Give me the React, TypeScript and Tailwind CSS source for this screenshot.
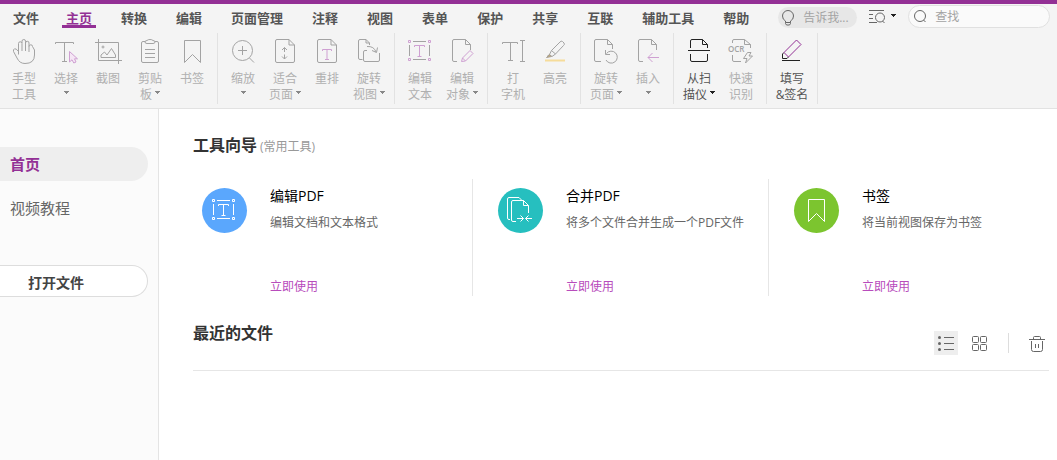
import { useState } from "react";
import type { ReactNode } from "react";
import clsx from "clsx";

const TABS = [
  "主页",
  "转换",
  "编辑",
  "页面管理",
  "注释",
  "视图",
  "表单",
  "保护",
  "共享",
  "互联",
  "辅助工具",
  "帮助",
];

type Tool = {
  lines: string[];
  icon: ReactNode;
  menu?: boolean;
  enabled?: boolean;
};

const Icon = ({ children }: { children: ReactNode }) => (
  <svg
    className="h-7 w-7 shrink-0"
    viewBox="0 0 28 28"
    fill="none"
    stroke="currentColor"
    strokeWidth="1"
    strokeLinejoin="round"
    aria-hidden="true"
  >
    {children}
  </svg>
);

const Caret = () => (
  <svg className="h-[3px] w-[5px] shrink-0" viewBox="0 0 5 3" fill="currentColor" aria-hidden="true">
    <path d="M0 0H5V1H4V2H3V3H2V2H1V1H0Z" />
  </svg>
);

// sheet with a folded corner, left open where another shape sits on top of it
const OpenSheet = () => <path d="M9 24.500H6Q4.500 24.500 4.500 23V4Q4.500 2.500 6 2.500H17.500L22.500 7.500V13M17.500 2.500V7.500H22.500" />;
const FullSheet = () => (
  <path d="M6 2.500H18L23.500 8V24Q23.500 25.500 22 25.500H6Q4.500 25.500 4.500 24V4Q4.500 2.500 6 2.500ZM18 2.500V8H23.500" />
);

const TextFrame = ({ accent }: { accent: string }) => (
  <>
    <path d="M7 4.500H20M7 22.500H20M3.500 8V19M23.500 8V19" />
    <g stroke={accent}>
      <path d="M2.500 3.500h2v2h-2zM22.500 3.500h2v2h-2zM2.500 21.500h2v2h-2zM22.500 21.500h2v2h-2z" />
      <path d="M8.500 10V8.500H18.500V10M13.500 8.500V19M11.500 19.500H15.500" />
    </g>
  </>
);

const PALE = "#cfa0d2";

const TOOL_GROUPS: Tool[][] = [
  [
    {
      lines: ["手型", "工具"],
      icon: (
        <Icon>
          <path d="M8.500 17.500L8.500 6.500Q8.500 4.800 10.200 4.800T12 6.500V14M12 6V4.200Q12 2.500 13.800 2.500T15.500 4.200V14M15.500 6Q15.500 4.300 17.300 4.300T19 6V15M19 9.500Q19 7.800 20.800 7.800T22.500 9.500L24.500 13V18Q24.500 26.500 15 26.500Q9.500 26.500 7 21L3.500 14.500Q3 12.500 4.500 11.800T8.500 14.500" />
        </Icon>
      ),
    },
    {
      lines: ["选择"],
      menu: true,
      icon: (
        <Icon>
          <path d="M3.500 7V5.500H21.500V7M12.500 5.500V24M10 24.500H15" />
          <path stroke={PALE} fill="#f5e6f5" d="M17.500 14.500V25L20 22.800L21.800 26L24 25L22.500 21.800H25.500Z" />
        </Icon>
      ),
    },
    {
      lines: ["截图"],
      icon: (
        <Icon>
          <path d="M1 5.500H24.500V27M4.500 2V23.500H28" />
          <circle cx="9" cy="10" r="1" />
          <path d="M7 20.500V18L10.500 15L13 18L17.500 11.500L21.500 18V20.500Z" />
        </Icon>
      ),
    },
    {
      lines: ["剪贴", "板"],
      menu: true,
      icon: (
        <Icon>
          <path d="M9 4.500H7Q5.500 4.500 5.500 6V24Q5.500 25.500 7 25.500H21Q22.500 25.500 22.500 24V6Q22.500 4.500 21 4.500H19" />
          <path d="M11 6.500Q9 6.500 9 5T11 3.500Q12 2.500 14 2.500T17 3.500Q19 3.500 19 5T17 6.500Z" />
          <path d="M9 12.500H19M9 16.500H19M9 20.500H19" />
        </Icon>
      ),
    },
    {
      lines: ["书签"],
      icon: (
        <Icon>
          <path d="M6.500 3.500H22.500V25.500L14.500 17.500L6.500 25.500Z" />
        </Icon>
      ),
    },
  ],
  [
    {
      lines: ["缩放"],
      menu: true,
      icon: (
        <Icon>
          <circle cx="13.500" cy="13.500" r="10" />
          <path d="M9 13.500H18M13.500 9V18M20.500 21L25 25.500" />
        </Icon>
      ),
    },
    {
      lines: ["适合", "页面"],
      menu: true,
      icon: (
        <Icon>
          <FullSheet />
          <path d="M13.500 15V10.500M11 13L13.500 10.500L16 13M13.500 17.500V22M11 19.500L13.500 22L16 19.500" />
        </Icon>
      ),
    },
    {
      lines: ["重排"],
      icon: (
        <Icon>
          <FullSheet />
          <path stroke={PALE} d="M9.500 14V12.500H18.500V14M14 12.500V22M12 22.500H16" />
        </Icon>
      ),
    },
    {
      lines: ["旋转", "视图"],
      menu: true,
      icon: (
        <Icon>
          <path d="M7.500 22.500H5Q3.500 22.500 3.500 21V4Q3.500 2.500 5 2.500H11L14.500 6V8M11 2.500V6H14.500" />
          <path d="M12 13.500H10Q8.500 13.500 8.500 15V23Q8.500 24.500 10 24.500H23Q24.500 24.500 24.500 23V16" />
          <path d="M12 9.500Q19 9 21 15M22.500 10.500L21.500 15.500L17 13.500" />
        </Icon>
      ),
    },
  ],
  [
    {
      lines: ["编辑", "文本"],
      icon: (
        <Icon>
          <TextFrame accent={PALE} />
        </Icon>
      ),
    },
    {
      lines: ["编辑", "对象"],
      menu: true,
      icon: (
        <Icon>
          <OpenSheet />
          <path stroke={PALE} d="M13.500 24.500L14.500 21L22 13.500L25 16.500L17.500 24ZM14.500 21L17.500 24" />
        </Icon>
      ),
    },
  ],
  [
    {
      lines: ["打", "字机"],
      icon: (
        <Icon>
          <path d="M3.500 7V5.500H18.500V7M11.500 5.500V23M9 23.500H14M21 3.500H26M23.500 3.500V24.500M21 24.500H26" />
        </Icon>
      ),
    },
    {
      lines: ["高亮"],
      icon: (
        <Icon>
          <path d="M10.500 13.500L19 5Q20 3.500 21.500 4.500L23 6Q24 7.500 22.500 8.500L14.500 17ZM10.500 13.500L8.500 17.500L11 19.500L14.500 17M8.500 17.500L6 19.500" />
          <path fill="#bda77c" stroke="#a9a194" d="M5.500 20.500L8.500 17.500L10.500 19.500Z" />
          <path d="M4 23.500H24" stroke="#f6dc9a" strokeWidth="2" />
        </Icon>
      ),
    },
  ],
  [
    {
      lines: ["旋转", "页面"],
      menu: true,
      icon: (
        <Icon>
          <path d="M9 24.500H4Q2.500 24.500 2.500 23V4Q2.500 2.500 4 2.500H15.500L20.500 7.500V12M15.500 2.500V7.500H20.500" />
          <path d="M14 23A6 6 0 1 0 14.500 16.500M13.500 13V17.500H18" />
        </Icon>
      ),
    },
    {
      lines: ["插入"],
      menu: true,
      icon: (
        <Icon>
          <OpenSheet />
          <path stroke={PALE} d="M25 20.500H14M18.500 16L14 20.500L18.500 25" />
        </Icon>
      ),
    },
  ],
  [
    {
      lines: ["从扫", "描仪"],
      menu: true,
      enabled: true,
      icon: (
        <Icon>
          <path d="M5.500 11V4Q5.500 2.500 7 2.500H17.500L22.500 7.500V11M17.500 2.500V7.500H22.500M3 13.500H25M5.500 17V23Q5.500 24.500 7 24.500H21Q22.500 24.500 22.500 23V17" />
        </Icon>
      ),
    },
    {
      lines: ["快速", "识别"],
      icon: (
        <Icon>
          <path d="M5.500 6V4Q5.500 2.500 7 2.500H17.500L23.500 7.500V11M17.500 2.500V7.500H23.500M5.500 18V23Q5.500 24.500 7 24.500H14" />
          <text
            x="1"
            y="15"
            fontSize="8"
            fontWeight="600"
            fontFamily="Open Sans, sans-serif"
            fill="currentColor"
            stroke="none"
          >
            OCR
          </text>
          <path d="M20.500 15.500L16.500 21.500H20L18.500 26L25.500 19H22L24 15.500Z" />
        </Icon>
      ),
    },
  ],
  [
    {
      lines: ["填写", "&签名"],
      enabled: true,
      icon: (
        <Icon>
          <path d="M6 15.500L4.500 17V21.500H9L10.500 20M4 23.500H22" />
          <path stroke="#933095" d="M6 15.500L18.500 3L23 7.500L10.500 20Z" />
        </Icon>
      ),
    },
  ],
];

const GUIDES = [
  {
    title: "编辑PDF",
    description: "编辑文档和文本格式",
    color: "bg-[#5aa7fd]",
    icon: (
      <Icon>
        <TextFrame accent="#fff" />
      </Icon>
    ),
  },
  {
    title: "合并PDF",
    description: "将多个文件合并生成一个PDF文件",
    color: "bg-[#26bfbf]",
    icon: (
      <Icon>
        <path d="M4 23.500H3Q1.500 23.500 1.500 22V3Q1.500 1.500 3 1.500H13L15.500 4" />
        <path d="M10 25.500H7Q5.500 25.500 5.500 24V6Q5.500 4.500 7 4.500H17.500L22.500 9.500V17M17.500 4.500V9.500H22.500" />
        <path d="M11 22.500H17.500M14.500 19.500L17.500 22.500L14.500 25.500M26 22.500H19.500M22.500 19.500L19.500 22.500L22.500 25.500" />
      </Icon>
    ),
  },
  {
    title: "书签",
    description: "将当前视图保存为书签",
    color: "bg-[#7cc52f]",
    icon: (
      <Icon>
        <path d="M6.500 3.500H22.500V25.500L14.500 17.500L6.500 25.500Z" />
      </Icon>
    ),
  },
];

const ToolButton = ({ tool }: { tool: Tool }) => {
  const [first, second] = tool.lines;

  return (
    <button
      type="button"
      disabled={!tool.enabled}
      className={clsx(
        "flex w-[42px] flex-col items-center pt-1 text-xs leading-4 whitespace-nowrap",
        tool.enabled ? "text-[#222]" : "text-[#a3a3a3]"
      )}
    >
      {tool.icon}
      <span className={clsx("mt-1.5", tool.enabled ? "text-[#555]" : "text-[#b0b0b0]")}>{first}</span>
      <span className="flex h-4 items-start gap-[3px]">
        {second && <span className={tool.enabled ? "text-[#555]" : "text-[#b0b0b0]"}>{second}</span>}
        {tool.menu && (
          <span className={clsx("flex pt-1", !second && "pt-0.5", tool.enabled ? "text-[#222]" : "text-[#888]")}>
            <Caret />
          </span>
        )}
      </span>
    </button>
  );
};

const Header = () => {
  const [activeTab, setActiveTab] = useState("主页");

  return (
    <header className="border-t-4 border-b border-t-[#933095] border-b-[#e2e2e2] bg-[#f4f4f4] pb-1">
      <div className="flex h-[29px] items-start pr-[7px] pl-[9px]">
        <button type="button" className="mr-[19px] h-6 px-1 text-[13px] leading-7 font-bold text-[#555]">
          文件
        </button>
        <nav className="flex shrink-0 gap-[21px]">
          {TABS.map((tab) => (
            <button
              key={tab}
              type="button"
              onClick={() => setActiveTab(tab)}
              className={clsx(
                "h-6 border-b-[3px] px-1 text-[13px] leading-7 font-bold",
                tab === activeTab ? "border-[#933095] text-[#933095]" : "border-transparent text-[#555]"
              )}
            >
              {tab}
            </button>
          ))}
        </nav>
        <div className="mt-[3px] ml-[25px] flex h-[21px] w-[79px] items-center gap-2 rounded-full bg-[#e7e7e7] pl-[3px] text-[#666]">
          <svg className="h-4 w-[14px] shrink-0" viewBox="0 0 14 16" fill="none" stroke="currentColor" aria-hidden="true">
            <path d="M4.500 12.500V11Q1.500 9.500 1.500 6A5.500 5.500 0 0 1 12.500 6Q12.500 9.500 9.500 11V12.500ZM4.500 12.500V13.500L5.500 15H8.500L9.500 13.500V12.500" />
          </svg>
          <input
            type="text"
            aria-label="告诉我"
            placeholder="告诉我..."
            className="h-full w-full min-w-0 bg-transparent text-xs outline-none placeholder:text-[#a3a3a3]"
          />
        </div>
        <button type="button" aria-label="高级查找" className="mt-1 ml-3 flex h-6 items-start gap-[5px] pt-px text-[#222]">
          <svg className="h-[15px] w-[17px]" viewBox="0 0 17 15" fill="none" stroke="#666" aria-hidden="true">
            <path d="M0 1.500H15M0 5.500H4M0 9.500H4M0 13.500H8M13.500 12L15.500 14" />
            <circle cx="11" cy="8.500" r="4.500" />
          </svg>
          <span className="flex pt-[5px]">
            <Caret />
          </span>
        </button>
        <div className="mt-px ml-3 flex h-[23px] flex-1 items-center gap-2 rounded-full border border-[#e0e0e0] bg-[#fafafa] pl-1 text-[#666]">
          <svg className="h-[14px] w-[14px] shrink-0" viewBox="0 0 14 14" fill="none" stroke="currentColor" aria-hidden="true">
            <circle cx="7" cy="6" r="5.500" />
            <path d="M10.500 10L12.500 12" />
          </svg>
          <input
            type="text"
            aria-label="查找"
            placeholder="查找"
            className="h-full w-full min-w-0 bg-transparent text-xs outline-none placeholder:text-[#a3a3a3]"
          />
        </div>
      </div>
      <div className="flex h-[71px]">
        {TOOL_GROUPS.map((group) => (
          <div key={group[0].lines.join("")} className="flex border-r border-[#e2e2e2] px-1 first:pl-[3px]">
            {group.map((tool) => (
              <ToolButton key={tool.lines.join("")} tool={tool} />
            ))}
          </div>
        ))}
      </div>
    </header>
  );
};

const Sidebar = () => (
  <aside className="w-[159px] shrink-0 border-r border-[#e4e4e4] bg-[#fbfbfb] pt-[38px] pr-2.5">
    <nav className="flex flex-col gap-2.5 text-[15px] leading-[34px]">
      <a href="#home" className="rounded-r-full bg-[#eee] pl-2.5 font-bold text-[#933095]">
        首页
      </a>
      <a href="#tutorials" className="rounded-r-full pl-2.5 text-[#666]">
        视频教程
      </a>
    </nav>
    <button
      type="button"
      className="mt-10 h-8 w-full rounded-r-full border border-l-0 border-[#ddd] bg-white pt-1 pl-7 text-left text-sm font-bold text-[#444]"
    >
      打开文件
    </button>
  </aside>
);

const RecentFiles = () => {
  const [view, setView] = useState<"list" | "grid">("list");

  return (
    <section className="mt-6 flex h-[51px] items-start border-b border-[#e6e6e6]">
      <h2 className="flex-1 text-base leading-[26px] font-bold text-[#333]">最近的文件</h2>
      <div className="mt-[11px] flex items-center text-[#666]">
        <button
          type="button"
          aria-label="列表"
          onClick={() => setView("list")}
          className={clsx("h-6 w-6", view === "list" && "bg-[#eee]")}
        >
          <svg viewBox="0 0 24 24" stroke="currentColor" aria-hidden="true">
            <path d="M10 6.500H20M10 12.500H20M10 18.500H20" />
            <g fill="currentColor" stroke="none">
              <circle cx="5.500" cy="6.500" r="1.500" />
              <circle cx="5.500" cy="12.500" r="1.500" />
              <circle cx="5.500" cy="18.500" r="1.500" />
            </g>
          </svg>
        </button>
        <button
          type="button"
          aria-label="缩略图"
          onClick={() => setView("grid")}
          className={clsx("ml-[10px] h-6 w-6", view === "grid" && "bg-[#eee]")}
        >
          <svg viewBox="0 0 24 24" fill="none" stroke="currentColor" aria-hidden="true">
            <rect x="4.500" y="5.500" width="6" height="6" rx="1" />
            <rect x="12.500" y="5.500" width="6" height="6" rx="1" />
            <rect x="4.500" y="13.500" width="6" height="6" rx="1" />
            <rect x="12.500" y="13.500" width="6" height="6" rx="1" />
          </svg>
        </button>
        <div className="ml-4 h-5 w-px bg-[#ddd]" />
        <button type="button" aria-label="清空" className="ml-4 h-6 w-6">
          <svg viewBox="0 0 24 24" fill="none" stroke="currentColor" aria-hidden="true">
            <path d="M4 8.500H20M8.500 8.500V6.500Q8.500 5.500 9.500 5.500H14.500Q15.500 5.500 15.500 6.500V8.500M6.500 10V18.500Q6.500 20.500 8.500 20.500H15.500Q17.500 20.500 17.500 18.500V10M10.500 13V17M13.500 13V17" />
          </svg>
        </button>
      </div>
    </section>
  );
};

const App = () => (
  <div className="flex min-h-screen flex-col bg-white font-['Open_Sans','Noto_Sans_CJK_SC',sans-serif]">
    <Header />
    <div className="flex flex-1">
      <Sidebar />
      <main className="min-w-0 flex-1 overflow-hidden pt-6 pr-2 pl-[34px]">
        <h1 className="flex items-baseline gap-[3px] text-base leading-6 font-bold text-[#333]">
          工具向导
          <span className="text-xs font-normal text-[#999]">(常用工具)</span>
        </h1>
        <section className="-mx-4 mt-[22px] grid grid-cols-3">
          {GUIDES.map((guide) => (
            <article
              key={guide.title}
              className="flex items-start gap-[23px] border-r border-[#e6e6e6] pt-[7px] pl-[25px] last:border-r-0"
            >
              <div className={clsx("mt-0.5 h-[45px] w-[45px] shrink-0 rounded-full p-2 text-white", guide.color)}>
                {guide.icon}
              </div>
              <div className="whitespace-nowrap">
                <h2 className="text-sm leading-5 text-black">{guide.title}</h2>
                <p className="mt-2 text-xs leading-[18px] text-[#666]">{guide.description}</p>
                <a href="#use" className="mt-[46px] block text-xs leading-[18px] text-[#b84cbc]">
                  立即使用
                </a>
              </div>
            </article>
          ))}
        </section>
        <RecentFiles />
      </main>
    </div>
  </div>
);

export default App;
